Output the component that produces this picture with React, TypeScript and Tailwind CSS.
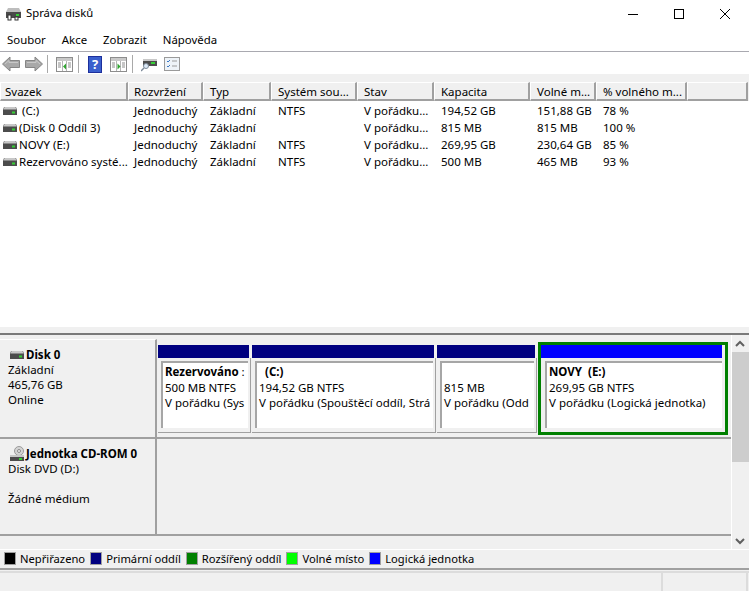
import type { ReactNode } from 'react'

const columns = [
  { label: 'Svazek', width: 128 },
  { label: 'Rozvržení', width: 75 },
  { label: 'Typ', width: 68 },
  { label: 'Systém sou...', width: 86 },
  { label: 'Stav', width: 77 },
  { label: 'Kapacita', width: 96 },
  { label: 'Volné m...', width: 66 },
  { label: '% volného m...', width: 91 },
  { label: '', width: 61 },
]

const volumes = [
  [' (C:)', 'Jednoduchý', 'Základní', 'NTFS', 'V pořádku...', '194,52 GB', '151,88 GB', '78 %'],
  ['(Disk 0 Oddíl 3)', 'Jednoduchý', 'Základní', '', 'V pořádku...', '815 MB', '815 MB', '100 %'],
  ['NOVY (E:)', 'Jednoduchý', 'Základní', 'NTFS', 'V pořádku...', '269,95 GB', '230,64 GB', '85 %'],
  ['Rezervováno systé...', 'Jednoduchý', 'Základní', 'NTFS', 'V pořádku...', '500 MB', '465 MB', '93 %'],
]

const legend = [
  { label: 'Nepřiřazeno', color: 'bg-black' },
  { label: 'Primární oddíl', color: 'bg-[#000080]' },
  { label: 'Rozšířený oddíl', color: 'bg-[#008000]' },
  { label: 'Volné místo', color: 'bg-[#00ff00]' },
  { label: 'Logická jednotka', color: 'bg-[#0000ff]' },
]

function DriveIcon({ className = '' }: { className?: string }) {
  return (
    <svg width="14" height="8" viewBox="0 0 14 8" className={className}>
      <path d="M1 0h12l1 3v5H0V3z" fill="#4c4c4c" />
      <path d="M1.5 0h11l1 2.5H.5z" fill="#c8c8c8" />
      <rect x="9" y="4.5" width="3" height="2" fill="#35d035" />
    </svg>
  )
}

function CdIcon() {
  return (
    <svg width="14" height="15" viewBox="0 0 14 15" className="shrink-0">
      <circle cx="9" cy="5" r="4.5" fill="#d4d4d4" stroke="#9a9a9a" />
      <circle cx="9" cy="5" r="1.5" fill="#f4f4f4" stroke="#8a8a8a" />
      <rect x="0" y="9" width="14" height="2" fill="#c8c8c8" />
      <rect x="0" y="11" width="14" height="4" fill="#4c4c4c" />
      <rect x="9" y="12" width="3" height="2" fill="#35d035" />
    </svg>
  )
}

function Arrow({ flip }: { flip?: boolean }) {
  return (
    <svg width="18" height="16" viewBox="0 0 18 16" className={flip ? '-scale-x-100' : ''}>
      <path d="M0.5 8L8 1v3.5h9.5v7H8V15z" fill="#a8a8a8" stroke="#858585" />
      <path d="M3 8l4-3.5v2h9" fill="none" stroke="#c8c8c8" />
    </svg>
  )
}

function PaneIcon({ right }: { right?: boolean }) {
  return (
    <svg width="17" height="15" viewBox="0 0 17 15">
      <rect x="0.5" y="0.5" width="16" height="14" fill="#fff" stroke="#8d8d8d" />
      <rect x="1" y="1" width="15" height="3" fill="#c9c9c9" />
      <path d="M6.5 4v10" stroke="#b5b5b5" />
      <path d="M10.5 4v10" stroke="#b5b5b5" />
      {right ? <path d="M7.5 6.5l3 3-3 3z" fill="#2fa52f" /> : <path d="M10 6.5l-3 3 3 3z" fill="#2fa52f" />}
      <path d="M2 6h3M2 8h3M2 10h3M12 6h3M12 8h3M12 10h3" stroke="#8d8d8d" />
    </svg>
  )
}

function Separator() {
  return <div className="h-[18px] w-px bg-[#a9a9a9]" />
}

function Partition({ bar, width, children }: { bar: string; width: number; children: ReactNode }) {
  return (
    <div style={{ width }} className="mt-[6px] flex h-[88px] shrink-0 flex-col">
      <div className={`mr-[2px] h-[13px] shrink-0 ${bar}`} />
      <div className="flex-1 border-r border-b border-[#a0a0a0] pt-[3px] pl-[3px] pr-[2px]">
        <div className="h-[67px] overflow-hidden border-t-[2px] border-l-[2px] border-[#a6a6a6] bg-white pl-[2px] pt-[1px] leading-[15.5px] whitespace-nowrap">
          {children}
        </div>
      </div>
    </div>
  )
}

export default function App() {
  return (
    <div className="flex h-[591px] w-[749px] flex-col overflow-hidden bg-[#f0f0f0] text-[11.5px] text-black [font-family:'Noto_Sans',sans-serif]">
      {/* title bar */}
      <div className="flex h-[30px] shrink-0 items-center bg-white pb-[3px] pl-[5px]">
        <svg width="17" height="16" viewBox="0 0 17 16" className="mr-[4px]">
          <path d="M3 2h11l2 4H1z" fill="#bdbdbd" />
          <rect x="1" y="6" width="15" height="6" fill="#4a4a4a" />
          <rect x="11" y="8" width="3" height="2" fill="#35d035" />
          <rect x="3" y="9" width="3" height="5" fill="#fff" stroke="#333" strokeWidth="1" />
          <rect x="10" y="11" width="3" height="3" fill="#fff" stroke="#333" strokeWidth="1" />
        </svg>
        <span className="text-[11.3px]">Správa disků</span>
        <div className="ml-auto flex h-full items-center">
          <svg width="12" height="12" viewBox="0 0 12 12" className="mr-[34px]"><path d="M1 6.5h10" stroke="#000" /></svg>
          <svg width="12" height="12" viewBox="0 0 12 12" className="mr-[34px]"><rect x="1.5" y="1.5" width="9" height="9" fill="none" stroke="#000" /></svg>
          <svg width="12" height="12" viewBox="0 0 12 12" className="mr-[18px]"><path d="M1 1l10 10M11 1L1 11" stroke="#000" /></svg>
        </div>
      </div>

      {/* menu */}
      <div className="flex h-[22px] shrink-0 items-center gap-[16px] border-b border-[#a9a9b0] bg-white pb-[2px] pl-[7px] text-[11.4px]">
        <span>Soubor</span>
        <span>Akce</span>
        <span>Zobrazit</span>
        <span>Nápověda</span>
      </div>

      {/* toolbar */}
      <div className="flex h-[22px] shrink-0 items-center bg-white pl-[2px] pt-[2px]">
        <Arrow />
        <div className="w-[5px]" />
        <Arrow flip />
        <div className="w-[4px]" />
        <Separator />
        <div className="w-[8px]" />
        <PaneIcon />
        <div className="w-[5px]" />
        <Separator />
        <div className="w-[9px]" />
        <div className="flex h-[17px] w-[14px] items-center justify-center border border-[#1c2f9c] bg-[#3a5fcd] text-[13px] font-bold leading-none text-white">?</div>
        <div className="w-[8px]" />
        <PaneIcon right />
        <div className="w-[5px]" />
        <Separator />
        <div className="w-[8px]" />
        <svg width="16" height="16" viewBox="0 0 16 16">
          <rect x="2" y="4" width="14" height="6" fill="#4c4c4c" />
          <rect x="2" y="3" width="14" height="2" fill="#c8c8c8" />
          <rect x="10" y="6" width="4" height="2" fill="#35d035" />
          <circle cx="5" cy="10" r="2.5" fill="#dbe9f7" stroke="#7d8a99" />
          <path d="M3 12l-3 3" stroke="#7d8a99" strokeWidth="1.5" />
        </svg>
        <div className="w-[7px]" />
        <svg width="16" height="14" viewBox="0 0 16 14">
          <rect x="0.5" y="0.5" width="15" height="13" fill="#eef3f8" stroke="#9a9a9a" />
          <path d="M3 4l1 1 2-2M3 9l1 1 2-2" stroke="#3b78c4" fill="none" />
          <path d="M8 4h5M8 9h5" stroke="#9a9a9a" />
        </svg>
      </div>

      <div className="h-[8px] shrink-0" />

      {/* list */}
      <div className="flex h-[245px] shrink-0 flex-col bg-white">
        <div className="flex h-[19px] shrink-0 bg-[#f0f0f0]">
          {columns.map((col, i) => (
            <div
              key={col.label || 'filler'}
              style={{ width: col.width }}
              className={`flex shrink-0 items-center border-t border-l border-t-white border-l-white border-r-2 border-b-2 border-r-[#a0a0a0] border-b-[#a0a0a0] pt-px ${i === 0 ? 'pl-[4px]' : i === 1 ? 'pl-[5px]' : 'pl-[6px]'}`}
            >
              {col.label}
            </div>
          ))}
        </div>
        <div className="pt-px">
          {volumes.map((row) => (
            <div key={row[0]} className="flex h-[17px] items-center">
              {row.map((cell, i) => (
                <div
                  key={i}
                  style={{ width: columns[i].width }}
                  className={`flex shrink-0 items-center whitespace-pre ${i === 0 ? 'gap-[2px] pl-[3px]' : i === 1 ? 'pl-[6px]' : 'pl-[7px]'}`}
                >
                  {i === 0 && <DriveIcon className="shrink-0" />}
                  {cell}
                </div>
              ))}
            </div>
          ))}
        </div>
      </div>

      {/* splitter */}
      <div className="h-[6px] shrink-0" />
      <div className="h-[2px] shrink-0 bg-[#7a7a7a]" />

      {/* disks */}
      <div className="flex h-[214px] shrink-0">
        <div className="w-[731px] shrink-0 pt-[4px]">
          <div className="flex h-[100px]">
            <div className="h-full w-[157px] shrink-0 border-t border-t-white border-r-2 border-b-2 border-r-[#a0a0a0] border-b-[#a0a0a0] pl-[8px] pt-[7px] leading-[15px]">
              <div className="flex items-center gap-[2px] pl-[2px] font-bold"><DriveIcon />Disk 0</div>
              <div>Základní</div>
              <div>465,76 GB</div>
              <div>Online</div>
            </div>
            <div className="flex flex-1 gap-px border-b-2 border-[#a0a0a0] pl-px">
              <Partition bar="bg-[#000080]" width={93}>
                <div><span className="font-bold">Rezervováno</span> :</div>
                <div>500 MB NTFS</div>
                <div>V pořádku (Sys</div>
              </Partition>
              <Partition bar="bg-[#000080]" width={184}>
                <div className="font-bold whitespace-pre">  (C:)</div>
                <div>194,52 GB NTFS</div>
                <div>V pořádku (Spouštěcí oddíl, Strá</div>
              </Partition>
              <Partition bar="bg-[#000080]" width={100}>
                <div>&nbsp;</div>
                <div>815 MB</div>
                <div>V pořádku (Odd</div>
              </Partition>
              <div className="mt-[3px] flex h-[93px] w-[190px] shrink-0 flex-col border-[3px] border-[#008000] bg-[#f0f0f0]">
                <div className="mr-[3px] h-[13px] shrink-0 bg-[#0000ff]" />
                <div className="pt-[3px] pl-[4px] pr-[3px]">
                  <div className="h-[67px] overflow-hidden border-t-[2px] border-l-[2px] border-[#a6a6a6] bg-white pl-[2px] pt-[1px] leading-[15.5px] whitespace-nowrap">
                    <div className="font-bold whitespace-pre">NOVY  (E:)</div>
                    <div>269,95 GB NTFS</div>
                    <div>V pořádku (Logická jednotka)</div>
                  </div>
                </div>
              </div>
            </div>
          </div>
          <div className="flex h-[97px]">
            <div className="h-full w-[157px] shrink-0 border-r-2 border-b-2 border-[#a0a0a0] pl-[8px] pt-[7px] leading-[15px]">
              <div className="flex items-center gap-[2px] pl-[2px] font-bold"><CdIcon />Jednotka CD-ROM 0</div>
              <div>Disk DVD (D:)</div>
              <div>&nbsp;</div>
              <div>Žádné médium</div>
            </div>
            <div className="flex-1 border-b-2 border-[#a0a0a0]" />
          </div>
        </div>
        {/* scrollbar */}
        <div className="flex w-[18px] shrink-0 flex-col border-l border-white">
          <div className="flex h-[17px] items-center justify-center pr-[2px]">
            <svg width="10" height="8" viewBox="0 0 10 8"><path d="M1 6l4-4 4 4" fill="none" stroke="#606060" strokeWidth="2" /></svg>
          </div>
          <div className="h-[110px] w-full bg-[#cdcdcd]" />
          <div className="flex-1" />
          <div className="flex h-[17px] items-center justify-center pr-[2px]">
            <svg width="10" height="8" viewBox="0 0 10 8"><path d="M1 2l4 4 4-4" fill="none" stroke="#606060" strokeWidth="2" /></svg>
          </div>
        </div>
      </div>

      {/* legend */}
      <div className="flex h-[21px] shrink-0 items-center gap-[5px] border-t border-t-white border-b-2 border-b-[#a0a0a0] pl-[4px] text-[11.2px]">
        {legend.map((item) => (
          <div key={item.label} className="flex items-center gap-[4px]">
            <span className={`h-[13px] w-[12px] border border-[#a0a0a0] ${item.color}`} />
            <span>{item.label}</span>
          </div>
        ))}
      </div>

      {/* status bar */}
      <div className="mt-[1px] flex flex-1 border-t-2 border-[#dcdcdc]">
        <div className="flex-1" />
        <div className="w-[85px] border-l-2 border-[#dcdcdc]" />
        <div className="mr-[1px] w-[2px] bg-[#dcdcdc]" />
      </div>
    </div>
  )
}
